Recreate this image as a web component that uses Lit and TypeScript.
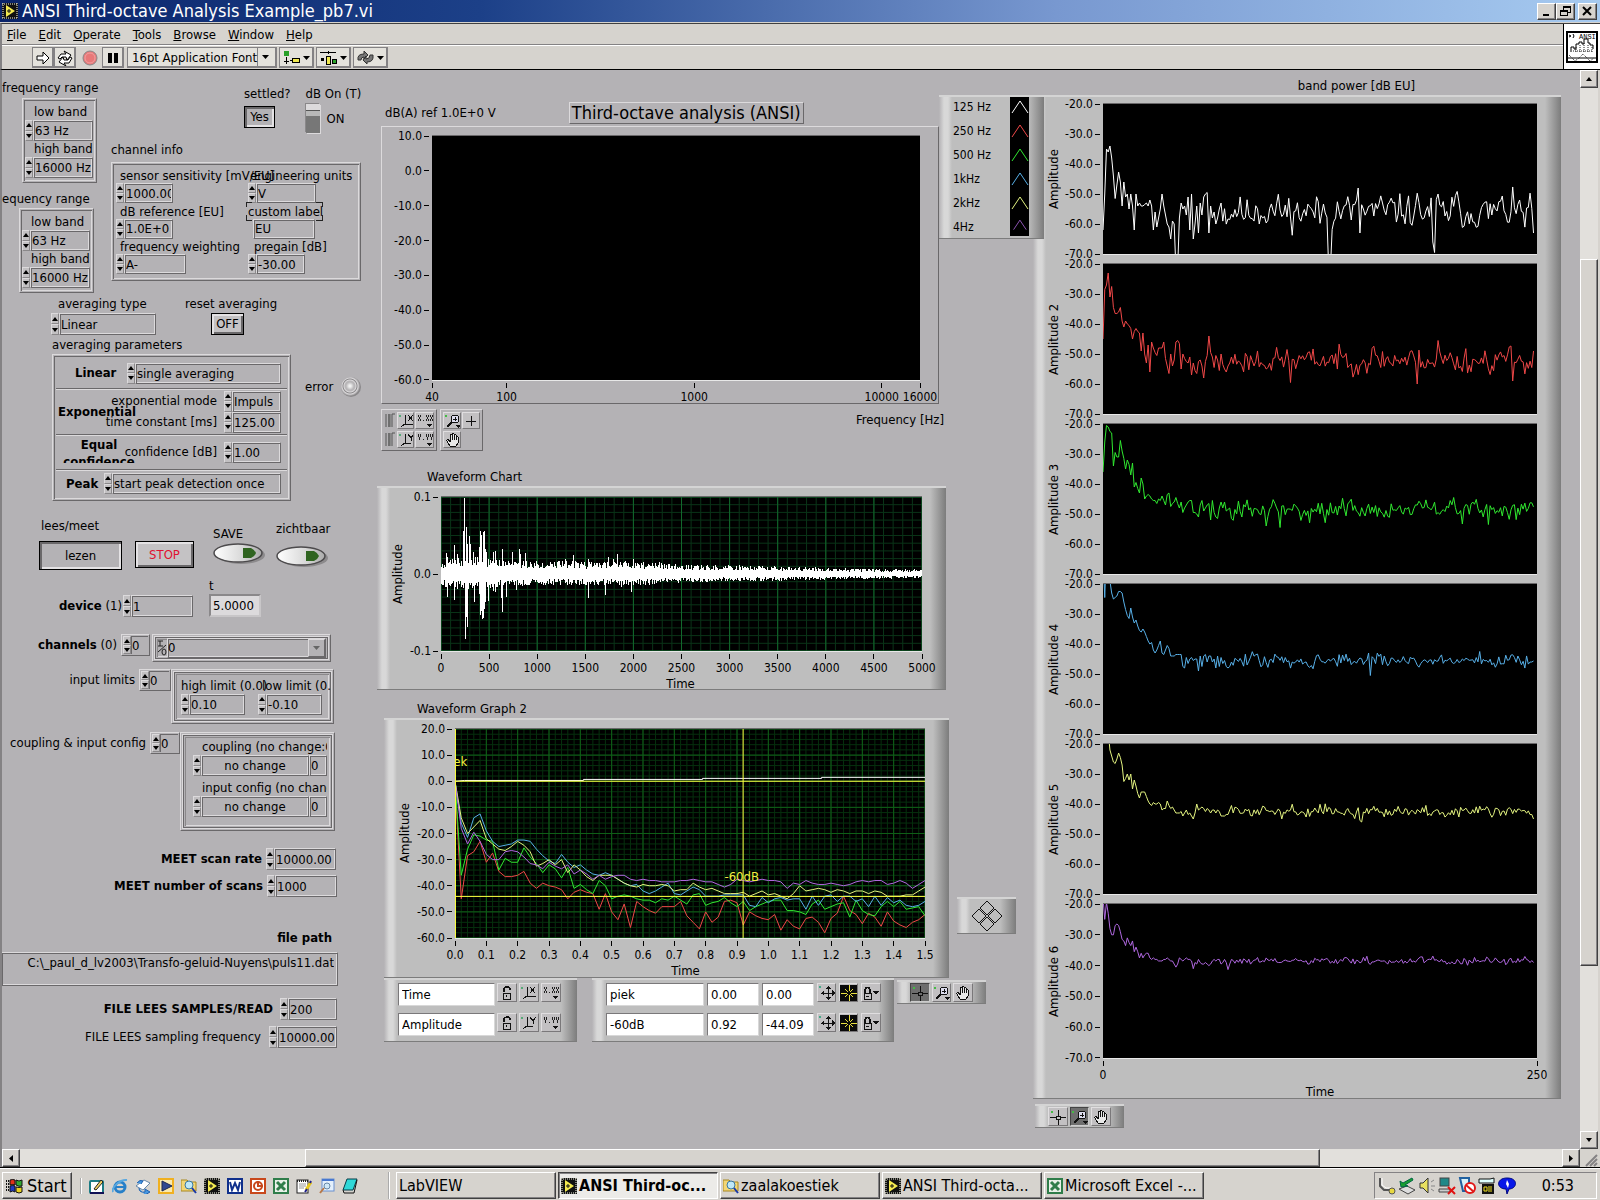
import { LitElement, html, svg, css, nothing } from "lit";
import { customElement, state } from "lit/decorators.js";
import { styleMap } from "lit/directives/style-map.js";
import { classMap } from "lit/directives/class-map.js";

/* ---------- data ---------- */

const COLORS = ["#ffffff", "#f04848", "#30e830", "#58b0e8", "#e4f480", "#b068e0"];

const RED = [0, -45, -28.5, -27, -23, -31, -27.5, -34.5, -36.5, -36.5, -36, -34.5, -39, -41, -39, -40, -40.5, -41.5, -45, -42.5, -41.5, -42.5, -43, -49, -43, -50, -53, -47, -56, -46, -48, -49.5, -50.5, -48, -48, -48, -46, -51.5, -54, -56.5, -50, -54, -52, -46, -45.5, -46.5, -55, -50, -51.5, -52.5, -53, -51, -57, -53, -55.5, -56.5, -52.5, -52, -54, -58, -52.5, -50.5, -44, -49.5, -51, -54.5, -50.5, -52, -55.5, -50, -53.5, -55, -56, -54, -53, -51];
const GREEN = [0, -36, -26, -20.5, -21, -22.5, -23, -34, -29.5, -31, -31, -25.5, -29, -31.5, -35, -32, -33.5, -37, -33, -41, -39.5, -41.5, -43, -38, -40, -45, -44, -43.5, -44, -45, -45.5, -45.5, -46.5, -45, -45.5, -44, -45.5, -47, -43.5, -43, -47.5, -46.5, -46, -44.5, -46.5, -48, -46, -49.5, -48, -47, -46, -45.5, -45.5, -49.5, -49.5, -50, -51, -47, -45.5, -49, -48, -47, -46.5, -52, -45.5, -49.5, -51, -51.5, -48, -46, -48, -46, -49, -48.5, -48, -51.5];
const BLUE = [0, -16, -21.5, -14, -12.5, -19, -23, -25, -24.5, -24, -22.5, -22.5, -23, -26, -28.5, -30.5, -31.5, -28, -31, -33, -32, -34, -35.5, -36, -35, -36, -37.5, -39, -40, -39.5, -42, -43, -42, -40.5, -39, -43, -43.5, -42, -40.5, -41.5, -44, -44, -44, -43.5, -43.5, -43.5, -43.5, -47.5, -48, -44.5, -46.5, -45, -44.5, -45.5, -45, -45, -49, -44, -47.5, -44, -43.5, -46, -44, -44, -46, -45, -48, -44, -47.5, -44.5, -46.5, -45.5, -47.5, -48, -47.5, -46];
const YELLOW = [0, -14, -20, -17.5, -15, -22, -24, -26, -26.5, -25, -23, -24.5, -27, -32.5, -31.5, -30, -32, -30, -35, -32, -34, -36.5, -38, -36, -36, -36, -37.5, -39, -40, -40.5, -39.5, -40, -40, -39.5, -40, -42, -41.5, -41.5, -39, -40.5, -41.5, -41, -42, -43, -43, -43, -42.5, -44, -43, -42, -43.5, -43, -44, -45, -43, -40, -42, -41.5, -41, -41.5, -42.5, -41.5, -42, -43, -42, -42, -43, -42, -42.5, -44, -44, -44, -43.5, -43.5, -42, -40.5];
const PURPLE = [0, -18, -24, -19.5, -23, -28, -30, -30, -27, -26.5, -27, -29, -31.5, -32, -33.5, -31, -32.5, -33.5, -32, -35.5, -34, -35.5, -37.5, -36, -37.5, -36.5, -36, -36, -37.5, -38, -37.5, -38, -38, -38.5, -38.5, -38.5, -38, -38, -37.5, -38, -38.5, -38.5, -39.5, -40.5, -39.5, -37.5, -38, -38.5, -38, -37.5, -38, -38, -38.5, -41, -39, -39.5, -38, -39, -39.5, -39.5, -39, -39.5, -40, -39.5, -38.5, -38, -38.5, -38, -38, -39.5, -39, -38, -39, -41, -39.5, -38];
const STEPS: [number, number][] = [[0, 0], [0.03, 0.3], [0.41, 0.3], [0.41, 0.7], [0.79, 0.7], [0.79, 1.1], [1.17, 1.1], [1.17, 1.5], [1.5, 1.5]];
const WHITE_HEAD = [-62, -50, -35, -36, -34, -38, -44, -51.5, -47, -42.7, -46, -54, -46, -51, -50, -55, -50, -54, -62, -50, -54, -53, -54, -54, -53.5, -53, -54, -52, -54, -62, -56, -61, -58, -55, -50, -54, -57, -60, -61, -65, -59, -60, -75, -75, -58, -53, -55, -54, -57, -51, -62, -50, -65, -60, -54, -63, -53, -57, -51, -50, -49.5, -63, -54, -58, -56, -60, -58, -55, -53];

function random(seed: number) {
  let s = seed;
  return () => {
    s = (s * 1664525 + 1013904223) % 4294967296;
    return s / 4294967296;
  };
}

/** Extends a measured decay with stationary noise up to 250 samples. */
function extend(head: number[], mean: number, spread: number, seed: number, spikes: Record<number, number> = {}) {
  const rnd = random(seed);
  const out = head.slice();
  let slow = 0;
  while (out.length < 249) {
    slow = slow * 0.5 + (rnd() - 0.5) * spread;
    out.push(mean + slow + (rnd() + rnd() - 1) * spread * 1.2);
  }
  for (const key of Object.keys(spikes)) out[+key] = spikes[+key];
  return out;
}

const BANDS = [
  extend(WHITE_HEAD, -55.5, 5, 11, { 130: -75, 131: -75, 147: -48, 148: -63, 190: -66, 191: -69.5, 193: -50, 248: -63 }),
  extend(RED.slice(1), -52, 3.6, 23, { 108: -59.5, 181: -60, 193: -45.5, 236: -59, 248: -49 }),
  extend(GREEN.slice(1), -48.5, 2.8, 31, { 80: -51, 94: -54, 102: -54.5, 202: -44.5, 222: -53.5 }),
  extend(BLUE.slice(1).map((v, i) => (i < 4 ? v + 3 * (i % 2 ? -1 : 2) : v)), -45.5, 2, 47, { 154: -50.5, 153: -43, 217: -42.5 }),
  extend([-19, -19, -17, -16, ...YELLOW.slice(5)], -42.3, 1.6, 59, { 148: -45.5, 149: -46 }),
  extend([-18, -25, -19.5, ...PURPLE.slice(4)], -38.6, 1.1, 61, { 72: -41.3 }),
];

function points(values: number[], count: number, top: number, bottom: number) {
  return values.map((v, i) => `${((i / count) * 1000).toFixed(1)},${(((top - v) / (top - bottom)) * 100).toFixed(2)}`).join(" ");
}

/** Column-wise min/max envelope of the recorded impulse response. */
function waveform() {
  const rnd = random(7);
  const level: [number, number][] = [[0, 10], [6, 13], [20, 14], [45, 15], [60, 12], [85, 11], [120, 11], [200, 11], [240, 8], [320, 7], [400, 5], [481, 4]];
  const up: Record<number, number> = { 5: 21, 6: 17, 13: 29, 16: 20, 22: 43, 23: 76, 25: 47, 26: 30, 28: 38, 29: 30, 32: 22, 38: 27, 39: 43, 40: 39, 42: 42, 43: 43, 44: 25, 45: 22, 52: 22, 54: 23, 61: 25, 71: 22, 78: 25, 79: 20, 84: 21, 124: 15, 132: 19, 147: 15, 167: 17, 172: 15, 176: 20, 192: 15 };
  const down: Record<number, number> = { 6: 23, 13: 26, 16: 15, 24: 65, 25: 43, 26: 53, 27: 15, 33: 28, 38: 20, 39: 41, 40: 37, 41: 45, 42: 44, 43: 35, 44: 28, 47: 27, 52: 17, 54: 18, 60: 24, 61: 38, 65: 23, 75: 16, 147: 24, 164: 21, 190: 18, 180: 13, 237: 9 };
  let d = "";
  for (let x = 0; x < 481; x++) {
    let k = 0;
    while (level[k + 1][0] < x) k++;
    const [x0, a] = level[k];
    const [x1, b] = level[k + 1];
    const amp = a + ((b - a) * (x - x0)) / (x1 - x0);
    const u = up[x] ?? amp * (0.5 + rnd() * 0.7);
    const v = down[x] ?? amp * (0.45 + rnd() * 0.6);
    d += `M${x} ${(77 - u).toFixed(1)}V${(77 + v).toFixed(1)}`;
  }
  return d;
}
const WAVE = waveform();

const range = (n: number) => Array.from({ length: n }, (_, i) => i);
const gridPath = (cols: number, rows: number) =>
  range(cols + 1).map((i) => `M${(i * 1000) / cols} 0V100`).join("") + range(rows + 1).map((i) => `M0 ${(i * 100) / rows}H1000`).join("");

/* ---------- icons ---------- */

const lvIcon = html`<svg width="16" height="16" viewBox="0 0 16 16"><rect width="16" height="16" fill="#101010"/><path d="M1 0v16M15 0v16M0 1h16M0 15h16" stroke="#f4f4e0" stroke-dasharray="1 1"/><path d="M4 2l9 6-9 6z" fill="#f4ea50"/><path d="M5 8h4M7 6v4" stroke="#111"/></svg>`;
const excelIcon = html`<svg width="16" height="16" viewBox="0 0 16 16"><rect x="1" y="1" width="14" height="14" fill="#e8f0e8" stroke="#2f7d4a" stroke-width="2"/><path d="M4 4l8 8M12 4l-8 8" stroke="#2f7d4a" stroke-width="3"/></svg>`;
const searchIcon = html`<svg width="16" height="16" viewBox="0 0 16 16"><path d="M0 2h6l2 2h7v9H0z" fill="#f3d675" stroke="#a88820"/><circle cx="8" cy="7" r="4" fill="#bfe8f8" stroke="#3a78a0"/><path d="M11 10l4 5" stroke="#1838a8" stroke-width="2"/></svg>`;

const quick = [
  html`<svg width="16" height="16" viewBox="0 0 16 16"><rect x="1" y="3" width="13" height="12" rx="1" fill="#fff" stroke="#1c7c84" stroke-width="2"/><path d="M1 15h14" stroke="#115" stroke-width="2"/><path d="M5 11l7-9 2 2-7 8z" fill="#f0d060" stroke="#222"/></svg>`,
  html`<svg width="16" height="16" viewBox="0 0 16 16"><circle cx="8" cy="9" r="5" fill="none" stroke="#2880c8" stroke-width="3"/><path d="M4 9h9" stroke="#2880c8" stroke-width="2"/><path d="M1 14C-1 10 8 1 15 2" fill="none" stroke="#58a8e0" stroke-width="2"/></svg>`,
  html`<svg width="16" height="16" viewBox="0 0 16 16"><path d="M1 8l8-6 6 3-7 7z" fill="#fff" stroke="#68a"/><path d="M2 5q3-4 6-2l-2 3M4 10q0 5 6 4v-3l5 3-5 3" fill="#4898e0" stroke="#2060b0"/></svg>`,
  html`<svg width="16" height="16" viewBox="0 0 16 16"><rect x="1" y="1" width="14" height="14" fill="#f8e8b0" stroke="#f0b020" stroke-width="2"/><path d="M4 3l10 5-10 5z" fill="#304890" stroke="#1c2850"/></svg>`,
  searchIcon,
  lvIcon,
  html`<svg width="16" height="16" viewBox="0 0 16 16"><rect width="16" height="16" fill="#10308c"/><rect x="2" y="2" width="12" height="12" fill="#fff"/><path d="M3 4l2 8 3-7 3 7 2-8" fill="none" stroke="#10308c" stroke-width="2"/></svg>`,
  html`<svg width="16" height="16" viewBox="0 0 16 16"><rect width="16" height="16" fill="#c8481c"/><rect x="2" y="2" width="12" height="12" fill="#fff"/><circle cx="8" cy="8" r="4" fill="none" stroke="#c8481c" stroke-width="2"/><path d="M8 3v5h5" stroke="#c8481c" stroke-width="2" fill="none"/></svg>`,
  excelIcon,
  html`<svg width="16" height="16" viewBox="0 0 16 16"><rect x="1" y="2" width="11" height="13" fill="#fff" stroke="#222"/><path d="M1 3h11" stroke="#222" stroke-width="2" stroke-dasharray="1 1"/><path d="M3 6h7M3 8h7M3 10h5" stroke="#999"/><path d="M10 12l5-8" stroke="#e8c820" stroke-width="3"/><path d="M9 14l2-3M14 5l1-2" stroke="#20208c" stroke-width="2"/></svg>`,
  html`<svg width="16" height="16" viewBox="0 0 16 16"><rect x="3" y="1" width="12" height="12" fill="#e4f0fc" stroke="#6890d0"/><path d="M3 2h12" stroke="#4878d0" stroke-width="2"/><circle cx="8" cy="8" r="3" fill="#cfe8f8" stroke="#68a"/><path d="M5 10l-4 5" stroke="#b87848" stroke-width="2"/></svg>`,
  html`<svg width="16" height="16" viewBox="0 0 16 16"><path d="M5 1h10l-4 11H1z" fill="#30d8d8" stroke="#063c48"/><path d="M1 12l1 3h10l3-13" fill="none" stroke="#111"/></svg>`,
];

const tray = [
  html`<svg width="18" height="18" viewBox="0 0 18 18"><path d="M2 1v8l4 4h6" fill="none" stroke="#555" stroke-width="2"/><path d="M4 1v7l4 3h5" fill="none" stroke="#fff"/><circle cx="14" cy="14" r="3" fill="#e8d840" stroke="#555"/></svg>`,
  html`<svg width="18" height="18" viewBox="0 0 18 18"><path d="M1 12l8-3 8 4-7 4z" fill="#ddd" stroke="#444"/><path d="M14 1L5 6l-3-2 1 6 7-1-3-1 8-5z" fill="#18a030" stroke="#064"/></svg>`,
  html`<svg width="18" height="18" viewBox="0 0 18 18"><path d="M2 6h3l5-5v15l-5-5H2z" fill="#e8e060" stroke="#333"/><path d="M13 5l3-2M13 9h4M13 12l3 2" stroke="#888"/></svg>`,
  html`<svg width="18" height="18" viewBox="0 0 18 18"><rect x="2" y="1" width="9" height="8" fill="#208888" stroke="#444"/><path d="M1 12h11v3H1z" fill="#ccc" stroke="#444"/><path d="M10 10l7 7M17 10l-7 7" stroke="#e01010" stroke-width="2"/></svg>`,
  html`<svg width="18" height="18" viewBox="0 0 18 18"><path d="M2 1h9v13H5z" fill="#d8f0f8" stroke="#2060a0" stroke-width="2"/><circle cx="12" cy="11" r="5" fill="#fff" stroke="#e01818" stroke-width="2"/><path d="M8 8l8 7" stroke="#e01818" stroke-width="2"/></svg>`,
  html`<svg width="18" height="18" viewBox="0 0 18 18"><path d="M1 2h11l4-1v5H1z" fill="#dff" stroke="#111"/><rect x="4" y="7" width="12" height="10" fill="#111"/><path d="M6 10h3v4H6zM11 9v6M13 9v6" stroke="#f0e020" fill="none"/></svg>`,
  html`<svg width="18" height="18" viewBox="0 0 18 18"><path d="M9 1c12 0 10 11 2 11l-2 5-1-5C-2 12-2 1 9 1z" fill="#0818e8" stroke="#000880"/><path d="M9 3l2 4-1 4-2-4z" fill="#fff"/></svg>`,
];

const glyphs = {
  lock: html`<svg width="18" height="16" viewBox="0 0 18 16"><path d="M6 7V5a3 3 0 0 1 6 0" fill="none" stroke="#111" stroke-width="1.500"/><rect x="5" y="8" width="7" height="6" fill="none" stroke="#111"/><path d="M8 10v2" stroke="#111"/></svg>`,
  lockDrop: html`<svg width="18" height="16" viewBox="0 0 18 16"><path d="M3 8V5a2 2 0 0 1 5 0v3" fill="none" stroke="#111" stroke-width="1.500"/><path d="M2 8h7v6H2zM4 11h3" fill="none" stroke="#111"/><path d="M11 6h6l-3 4z" fill="#111"/></svg>`,
  x: html`<svg width="18" height="16" viewBox="0 0 18 16"><circle cx="2" cy="3" r="1" fill="#5a7"/><path d="M7 2v9h9M7 11l-4 3M10 2l5 6M15 2l-5 6" fill="none" stroke="#111"/></svg>`,
  y: html`<svg width="18" height="16" viewBox="0 0 18 16"><circle cx="2" cy="3" r="1" fill="#5a7"/><path d="M7 2v9h6M7 11l-4 3M10 2l3 4 3-4M13 6v3" fill="none" stroke="#111"/></svg>`,
  fmtX: html`<svg width="18" height="16" viewBox="0 0 18 16"><path d="M2 2v2M4 2v2M3 4v2M2 6v2M4 6v2M7 7v1M10 2v2M12 2v2M11 4v2M10 6v2M12 6v2M14 2v2M16 2v2M15 4v2M14 6v2M16 6v2" fill="none" stroke="#222"/><path d="M10 11h6l-3 3z" fill="#111"/></svg>`,
  fmtY: html`<svg width="18" height="16" viewBox="0 0 18 16"><path d="M2 2v3M4 2v3M3 5v3M7 7v1M10 2v3M12 2v3M11 5v3M14 2v3M16 2v3M15 5v3" fill="none" stroke="#222"/><path d="M10 11h6l-3 3z" fill="#111"/></svg>`,
  move: html`<svg width="18" height="16" viewBox="0 0 18 16"><circle cx="2" cy="2" r="1" fill="#4a8"/><path d="M10 1v14M3 8h14" stroke="#111"/><path d="M7 4l3-3 3 3zM7 12l3 3 3-3zM6 5L3 8l3 3zM14 5l3 3-3 3z" fill="#111"/></svg>`,
  cursor: html`<svg width="18" height="16" viewBox="0 0 18 16"><rect width="18" height="16" fill="#0a0a0a"/><path d="M1 8h6M11 8h6M9 0v6M9 10v6M5 4l3 3M10 9l3 3M13 4l-3 3M8 9l-3 3" stroke="#e8e040"/></svg>`,
  cross: html`<svg width="18" height="16" viewBox="0 0 18 16"><circle cx="3" cy="3" r="1" fill="#4b4"/><path d="M9 1v6M9 10v6M1 8h6M11 8h6M7 7h4v3H7z" stroke="#111" fill="none"/></svg>`,
  zoom: html`<svg width="18" height="16" viewBox="0 0 18 16"><circle cx="2" cy="3" r="1" fill="#4b4"/><circle cx="11" cy="6" r="4" fill="#dde" stroke="#111"/><path d="M9 6h4M11 4v4" stroke="#111"/><path d="M8 9l-5 5" stroke="#111" stroke-width="2"/><path d="M11 12h6l-3 3z" fill="#111"/></svg>`,
  hand: html`<svg width="18" height="16" viewBox="0 0 18 16"><path d="M6 14C4 11 2 9 3 8s2 0 3 2V3q1-1 2 0V2q1-1 2 0v1q1-1 2 0v2q1-1 2 0v6l-2 3zM8 3v5M10 3v5M12 4v4" fill="#e8e8e8" stroke="#111"/></svg>`,
  plus: html`<svg width="16" height="16" viewBox="0 0 16 16"><path d="M8 3v10M3 8h10" stroke="#111"/></svg>`,
  bars: html`<svg width="12" height="16" viewBox="0 0 12 16"><rect x="4" y="2" width="3" height="13" fill="#8a8a8a"/><path d="M2 2v13M5 2v13M8 15V2h3" stroke="#555" fill="none"/></svg>`,
};

const upTri = html`<svg width="6" height="4" viewBox="0 0 6 4"><path d="M0 4l3-4 3 4z" fill="#000"/></svg>`;
const downTri = html`<svg width="6" height="4" viewBox="0 0 6 4"><path d="M0 0l3 4 3-4z" fill="#000"/></svg>`;
const drop = html`<svg width="7" height="4" viewBox="0 0 7 4"><path d="M0 0h7L3.500 4z" fill="#000"/></svg>`;

/* ---------- chart ---------- */

interface ChartSpec {
  size: string;
  yTicks: string[];
  yLabel?: string;
  plot?: unknown;
  overlay?: unknown;
  xTicks?: [string, number][];
}

const chart = (c: ChartSpec) => html`
  <div class="chart ${c.size}">
    <div class="gutter">
      <span class="ylabel">${c.yLabel ?? nothing}</span>
      <div class="yticks">${c.yTicks.map((t) => html`<span class="ytick">${t}<i></i></span>`)}</div>
    </div>
    <div class="plot">
      <svg class="trace" viewBox="0 0 1000 100" preserveAspectRatio="none" role="img" aria-label=${c.yLabel ?? "spectrum"}>${c.plot ?? nothing}</svg>
      ${c.overlay ?? nothing}
    </div>
    ${c.xTicks
      ? html`<div class="xticks">${c.xTicks.map(([t, p]) => html`<span class="xtick" style=${styleMap({ left: `${p}%` })}><i></i>${t}</span>`)}</div>`
      : nothing}
  </div>
`;

const line = (values: number[], count: number, top: number, bottom: number, color: string) =>
  svg`<polyline points=${points(values, count, top, bottom)} fill="none" stroke=${color} />`;

@customElement("app-root")
export class AppRoot extends LitElement {
  @state() private running = true;

  static styles = css`
    :host {
      display: flex;
      flex-direction: column;
      min-height: 100vh;
      box-sizing: border-box;
      background: #d6d3ce;
      color: #000;
      font: 13px/16px "DejaVu Sans Condensed", Tahoma, "DejaVu Sans", sans-serif;
      white-space: nowrap;
      overflow: hidden;
    }
    *, *::before { box-sizing: border-box; }
    svg { display: block; flex: none; }
    .px { shape-rendering: crispEdges; }
    button, input, select { font: inherit; color: inherit; margin: 0; padding: 0; border-radius: 0; appearance: none; }
    input { min-width: 0; }

    .titlebar { display: flex; align-items: center; gap: 4px; height: 22px; padding: 0 3px 0 2px; background: linear-gradient(90deg, #0a246a, #1c4088 30%, #7898d0 66%, #a6caf0); color: #fff; font-size: 18px; }
    .titlebar h1 { flex: 1; margin: 0; font: inherit; line-height: 22px; }
    .winbtns { display: flex; }
    .winbtns button { display: grid; place-items: center; width: 19px; height: 17px; }
    .winbtns button:last-child { margin-left: 3px; }
    .raised, .winbtns button { background: #d6d3ce; border: 1px solid; border-color: #fff #404040 #404040 #fff; box-shadow: inset -1px -1px #848284; }

    .chrome { display: flex; margin-top: 1px; border-top: 1px solid #404040; border-left: 2px solid #848284; border-bottom: 1px solid #000; }
    .bars { flex: 1; }
    .menu { display: flex; gap: 12px; height: 21px; padding-left: 5px; line-height: 21px; border-bottom: 1px solid #848284; }
    .menu a { color: inherit; text-decoration: none; }
    .tools { display: flex; align-items: center; height: 24px; padding-left: 30px; border-top: 1px solid #fff; }
    .tools button { display: flex; align-items: center; justify-content: center; gap: 3px; height: 21px; width: 22px; background: #e4e2dc; border: 1px solid; border-color: #fff #404040 #404040 #fff; box-shadow: inset -1px -1px #848284; outline: 1px solid #848284; outline-offset: -1px; }
    .tools .flat { border-color: #d6d3ce; background: #d6d3ce; box-shadow: none; outline: none; margin: 0 1px 0 3px; }
    .tools .wide { width: 35px; margin-left: 2px; }
    .font { position: relative; margin-left: 3px; }
    .font select { display: block; width: 150px; height: 21px; padding-left: 4px; background: #e4e2dc; border: 1px solid; border-color: #fff #404040 #404040 #fff; box-shadow: inset -1px -1px #848284, inset -18px 0 #e4e2dc, inset -19px 0 #848284; outline: 1px solid #848284; outline-offset: -1px; }
    .font svg { position: absolute; right: 8px; top: 8px; pointer-events: none; }
    .viicon { display: grid; place-items: center; width: 37px; background: #fff; border-left: 1px solid #000; }

    .workspace { flex: 1; display: grid; grid-template-columns: minmax(0, 1fr) 18px; grid-template-rows: 1fr 18px; border-left: 2px solid #848284; padding-right: 2px; }
    .panel { display: flex; background: #b4b2b5; }
    .left { flex: none; width: 368px; }
    .center { flex: 663 1 0; min-width: 0; display: flex; flex-direction: column; }
    .right { flex: 528 1 0; min-width: 0; margin-right: 19px; }

    .vscroll, .hscroll { display: flex; background: #e2e0dc; }
    .vscroll { flex-direction: column; }
    .vscroll button, .hscroll button { display: grid; place-items: center; flex: none; }
    .vscroll button { height: 18px; }
    .hscroll button { width: 18px; }
    .vtrack { flex: 171 1 0; } .vthumb { flex: 707 1 0; } .vrest { flex: 165 1 0; }
    .htrack { flex: 286 1 0; } .hthumb { flex: 1015 1 0; } .hrest { flex: 243 1 0; }

    /* etched boxes and numeric fields */
    .etched { background: transparent; border: 1px solid; border-color: #dcdadc #6a686a #6a686a #dcdadc; box-shadow: inset 1px 1px #6a686a, inset -1px -1px #dcdadc; }
    .cluster { background: transparent; border: 1px solid; border-color: #dcdadc #6a686a #6a686a #dcdadc; box-shadow: inset 0 0 0 1px #b4b2b5, inset 2px 2px #6a686a, inset -2px -2px #dcdadc; }
    .array { background: transparent; border: 1px solid; border-color: #dcdadc #6a686a #6a686a #dcdadc; box-shadow: inset 0 0 0 1px #b4b2b5, inset 0 0 0 2px #dcdadc, inset 0 0 0 3px #6a686a, inset 0 0 0 4px #b4b2b5, inset 5px 5px #8a888a, inset -5px -5px #dcdadc; }
    .num { display: flex; height: 21px; }
    .num input { height: 100%; padding: 0 1px; outline: none; }
    .num.h20 { height: 20px; }
    .num.h22 { height: 22px; }
    .spin { display: flex; flex-direction: column; width: 8px; }
    .spin button { flex: 1; display: grid; place-items: center; background: #c2c0c2; border: 1px solid; border-color: #dcdadc #8a888a #8a888a #dcdadc; }
    .w48 { width: 49px; } .w58 { width: 60px; } .w62 { width: 62px; } .w96 { width: 97px; } .w107 { width: 108px; } .w145 { width: 146px; } .w168 { width: 169px; }
    .mid { text-align: center; }
    label, .label { display: block; }

    .top { display: flex; height: 225px; }
    .ranges { width: 102px; padding-top: 10px; }
    .ranges .cluster { width: 75px; height: 85px; padding: 5px 2px; }
    .ranges .first { margin: 2px 0 8px 20px; }
    .ranges .second { margin: 1px 0 0 17px; }
    .ranges .cluster label { padding-left: 9px; }
    .info { padding: 16px 0 0 7px; }
    .switches { display: flex; gap: 15px; height: 56px; padding-left: 133px; }
    .btn { display: grid; place-items: center; background: #c4c2c4; border: 1px solid #000; box-shadow: inset 2px 2px #e4e2e4, inset -2px -2px #6a686a; }
    .btn.sunk { background: #b4b2b5; box-shadow: inset 2px 2px #6a686a, inset -2px -2px #e4e2e4; }
    .yes { width: 31px; height: 22px; margin-top: 4px; }
    .toggle { display: flex; align-items: center; gap: 7px; margin-top: 2px; }
    .toggle button { width: 14px; height: 29px; border: 0; background: linear-gradient(#dcdadc 0 6px, #555 6px 7px, #b8b8b8 7px 12px, #777 12px); box-shadow: 1px 1px #dcdadc, -1px -1px #8a888a; }
    .channel { display: grid; grid-template-columns: 132px 1fr; width: 250px; height: 119px; margin-top: 4px; padding: 5px 4px; }
    .channel label { height: 15px; line-height: 15px; padding-left: 4px; }
    .channel .unit { padding-left: 2px; }
    .channel .pre { padding-left: 6px; }
    .marked { position: relative; }
    .channel .marked { width: 72px; padding-left: 0; }
    .marked svg { position: absolute; left: -3px; top: -3px; }
    .nospin { padding-left: 5px; }

    .avg { display: flex; padding: 1px 0 0 49px; gap: 29px; }
    .avg label { padding-left: 7px; margin-bottom: 1px; }
    .avg .off { width: 33px; height: 22px; margin: 1px 0 0 26px; }
    .ptitle { padding: 2px 0 1px 50px; height: 19px; }
    .params { display: flex; gap: 14px; padding-left: 50px; }
    .params .cluster { width: 239px; height: 147px; padding: 3px; display: grid; grid-template-rows: 31px 46px 35px 1fr; }
    .prow { display: grid; align-items: center; justify-items: end; padding: 0 6px 0 2px; border-bottom: 1px solid #6a686a; box-shadow: 0 1px #dcdadc; }
    .prow:last-child { border: 0; box-shadow: none; }
    .prow > * { grid-area: 1 / 1; }
    .prow b { justify-self: start; }
    .prow .indent1 { padding-left: 17px; }
    .prow .indent2 { padding-left: 8px; }
    .prow .eq { align-self: start; width: 82px; height: 28px; line-height: 17px; padding-top: 1px; text-align: center; overflow: hidden; white-space: normal; }
    .pair { display: flex; align-items: center; gap: 7px; }
    .prow .pair { justify-content: flex-end; }
    .error { display: flex; align-items: center; gap: 8px; height: 22px; margin-top: 22px; }
    .led { width: 20px; height: 20px; border-radius: 50%; background: radial-gradient(circle at 45% 45%, #f0f0f0 0 1px, #b8b6b8 4px 5px, #dcdadc 6px, #8a888a 7px, #dcdadc 8px, #8a888a 10px); }

    .actions { display: flex; height: 75px; padding: 17px 0 0 37px; }
    .actions label { padding-left: 2px; }
    .lezen { width: 83px; height: 29px; margin-top: 7px; }
    .stop { width: 59px; height: 27px; margin: 23px 19px 0 13px; color: #e01030; }
    .oval { display: block; padding: 0; border: 0; background: none; }
    .save { padding-top: 8px; width: 63px; }
    .show { padding-top: 3px; }
    .show .oval { margin-top: 8px; }

    .device { display: flex; align-items: flex-end; height: 41px; gap: 14px; }
    .device .pair { width: 191px; justify-content: flex-end; gap: 1px; }
    .tfield { padding-left: 2px; }
    .tfield input { width: 52px; height: 23px; padding: 0 2px; background: #dcdadc; border: 2px solid; border-color: #8a888a #c8c6c8 #c8c6c8 #8a888a; }
    .row { display: flex; justify-content: flex-end; align-items: flex-start; gap: 4px; padding-right: 36px; }
    .row > label { line-height: 22px; }
    .row > .index { margin-right: -4px; }
    .index { padding: 1px; height: 22px; border: 1px solid; border-color: #dcdadc #6a686a #6a686a #dcdadc; }
    .index .num { height: 18px; }
    .index input { border: 0; background: transparent; width: 20px; box-shadow: inset 1px 1px #6a686a; }
    .channels { margin-top: 17px; padding-right: 39px; }
    .channels .index input { width: 17px; }
    .row.channels > .index { margin-right: -2px; }
    .io { display: flex; align-items: center; width: 179px; height: 28px; padding: 0 4px; position: relative; }
    .io select { flex: 1; height: 20px; background: transparent; padding-left: 0; }
    .io .dd { position: absolute; right: 5px; top: 4px; width: 17px; height: 18px; display: grid; place-items: center; background: #b4b2b5; border: 1px solid; border-color: #dcdadc #6a686a #6a686a #dcdadc; pointer-events: none; }
    .limits { margin-top: 7px; }
    .limits .array { display: flex; width: 163px; height: 55px; padding: 8px 6px 0 9px; gap: 13px; overflow: hidden; }
    .limits .array > div { width: 64px; }
    .limits .array > div:last-child label { padding-left: 4px; }
    .coupling { margin-top: 8px; padding-right: 35px; }
    .coupling .array { width: 155px; height: 99px; padding: 6px 7px 0 12px; overflow: hidden; }
    .coupling .array label { padding-left: 9px; overflow: hidden; }
    .coupling .array > div { height: 41px; }
    .coupling .num input:last-child { width: 18px; }
    .meet1 { margin-top: 17px; padding-right: 34px; }
    .meet2 { margin-top: 5px; padding-right: 33px; }
    .pathlabel { margin: 33px 38px 6px 0; text-align: right; }
    .path { display: block; width: 336px; height: 34px; padding: 0 3px 14px 0; text-align: right; border-left: 0; }
    .file1 { margin: 12px 0 6px; padding-right: 33px; gap: 7px; }
    .file2 { padding-right: 33px; gap: 8px; }

    /* charts */
    .metal { background: linear-gradient(90deg, #b4b2b5 0, #d8d8d8 5px, #d8d8d8 9px, #bebebe 13px, #bebebe calc(100% - 16px), #7c7c7c 100%); border-top: 2px solid #d4d4d4; border-bottom: 1px solid #7c7c7c; }
    .chart { display: grid; grid-template-columns: var(--gutter) minmax(0, 1fr); }
    .gutter { display: flex; }
    .ylabel { width: 16px; margin-left: 13px; writing-mode: vertical-rl; transform: rotate(180deg); text-align: center; line-height: 16px; }
    .yticks { flex: 1; display: flex; flex-direction: column; justify-content: space-between; padding: 1px 3px 1px 0; }
    .ytick { display: flex; align-items: center; justify-content: flex-end; gap: 2px; height: 0; }
    .yticks, .xticks { font-size: 12px; }
    .ytick i { width: 5px; height: 1px; background: #000; }
    .plot { position: relative; overflow: hidden; height: var(--h); background: #000; border-top: 1px solid #6a686a; border-bottom: 1px solid #e8e8e8; }
    .trace { position: absolute; inset: 0; width: 100%; height: 100%; }
    .trace * { vector-effect: non-scaling-stroke; stroke-width: 1px; }
    .xticks { grid-column: 2; position: relative; height: 24px; }
    .xtick { position: absolute; top: 2px; width: 0; display: flex; flex-direction: column; align-items: center; gap: 1px; }
    .xtick i { flex: none; width: 1px; height: 5px; background: #000; }
    .cursorname { position: absolute; width: 0; display: flex; justify-content: center; color: #f0f040; }
    .flag1 { left: 0; top: 12%; }
    .flag2 { left: 61%; top: 67%; }
    .xlabel { display: block; height: 14px; text-align: center; }

    .spectrum { display: flex; align-items: flex-start; padding: 25px 0 0 11px; }
    .specmain { flex: 1; min-width: 0; }
    .spechead { display: flex; align-items: center; height: 31px; padding: 4px 4px 0; }
    .spechead h2 { margin: 0 0 0 73px; padding: 0 2px; font: inherit; font-size: 18px; line-height: 20px; border: 1px solid; border-color: #dcdadc #6a686a #6a686a #dcdadc; }
    .s1frame { border: 1px solid; border-color: #dcdadc #6a686a #6a686a #dcdadc; padding: 8px 18px 0 0; }
    .s1 { --gutter: 50px; --h: 246px; }
    .s1 .ylabel { width: 0; margin: 0; }
    .s1 .xticks { height: 22px; }
    .below { display: flex; justify-content: space-between; padding-top: 5px; }
    .below > span { margin: 3px -5px 0 0; }
    .pals { display: flex; gap: 3px; align-items: flex-start; }
    .pal { display: grid; gap: 2px; padding: 2px; border: 1px solid; border-color: #dcdadc #6a686a #6a686a #dcdadc; }
    .pal.three { grid-template-columns: 12px 17px 19px; gap: 2px 1px; }
    .pal.two { grid-template-columns: 18px 18px; gap: 2px 1px; }
    .pal button { height: 17px; }
    .tool { display: grid; place-items: center; overflow: hidden; background: #c2c0c2; border: 1px solid; border-color: #e0dee0 #7a787a #7a787a #e0dee0; }
    .tool svg { shape-rendering: crispEdges; }
    .tool.on { background: #6e6e6e; border-color: #444 #ccc #ccc #444; }
    .legend { position: relative; z-index: 1; flex: none; width: 105px; margin: 0 -11px 0 0; padding: 0 15px 2px 14px; }
    .legend ul { list-style: none; margin: 0; padding: 0; }
    .legend li { display: flex; justify-content: space-between; height: 19px; line-height: 20px; font-size: 12px; }
    .legend li:not(:last-child) { height: 24px; }
    .legend li svg { background: #000; height: 100%; }

    .wave { padding: 18px 87px 0 7px; }
    .wave .label { padding: 0 0 1px 50px; }
    .wave .metal { padding: 8px 24px 0 0; height: 204px; }
    .s2 { --gutter: 64px; --h: 156px; }
    .wave .xlabel, .graph .xlabel { padding-left: 62px; }
    .graph { padding: 11px 0 0 14px; }
    .graph > .label { padding: 0 0 1px 33px; }
    .graphrow { display: flex; align-items: flex-end; gap: 8px; padding-right: 17px; }
    .graphrow > div.metal { flex: 1; min-width: 0; height: 260px; padding: 8px 24px 0 0; }
    .s3 { --gutter: 71px; --h: 211px; }
    .diamond { flex: none; width: 59px; height: 37px; margin-bottom: 44px; display: grid; place-items: center; border-left: 0; border-right: 0; padding: 0; }
    .graphpals { display: flex; align-items: flex-start; }
    .cur { display: grid; height: 64px; align-content: center; padding: 0 16px 2px 14px; }
    .cur.a { grid-template-columns: 97px 20px 20px 20px; width: 193px; margin-right: 15px; gap: 7px 2px; }
    .cur.b { grid-template-columns: 98px 52px 52px 19px 19px 20px; width: 302px; gap: 7px 3px; padding-right: 12px; }
    .cur .tool, .mini .tool { height: 19px; padding: 0; }
    .cur input { height: 23px; padding: 0 3px; background: #fff; border: 1px solid; border-color: #7a787a #d8d8d8 #d8d8d8 #7a787a; }
    .mini { display: flex; gap: 2px; width: 89px; height: 24px; margin: 2px 0 0 3px; padding: 1px 13px; }
    .mini .tool { width: 20px; }

    .bandlabel { padding: 8px 0 1px 150px; text-align: center; margin-right: 31px; }
    .bands { padding: 6px 24px 0 0; }
    .bands .s4 { --gutter: 70px; --h: 152px; margin-bottom: 8px; }
    .bands .s4.last { --h: 156px; margin-bottom: 1px; }
    .bands .xlabel { padding-left: 70px; }
    .right .mini { margin: 5px 0 0 2px; }

    .taskbar { display: flex; align-items: center; height: 33px; padding: 3px 3px 0 2px; border-top: 1px solid #000; box-shadow: inset 0 1px #fff; font-size: 16px; }
    .start { display: flex; align-items: center; gap: 4px; width: 70px; height: 27px; padding: 0 3px; font-size: 18px; }
    .quick { display: flex; gap: 7px; padding: 0 0 0 7px; margin-left: 8px; border-left: 2px groove #fff; }
    .tasks { display: flex; gap: 2px; flex: 1; min-width: 0; margin-left: 30px; padding-left: 6px; border-left: 2px groove #fff; }
    .task { display: flex; align-items: center; gap: 2px; flex: 0 1 160px; min-width: 0; height: 27px; padding: 0 2px; }
    .task span { line-height: 22px; }
    .task.active { background: #ecebe8; border-color: #404040 #fff #fff #404040; box-shadow: inset 1px 1px #848284; }
    .tray { display: flex; align-items: center; gap: 2px; width: 223px; height: 27px; padding-left: 3px; border: 1px solid; border-color: #848284 #fff #fff #848284; }
    .tray time { margin-left: auto; padding-right: 22px; }
  `;

  private spin(name: string) {
    return html`<span class="spin"><button aria-label="Increment ${name}">${upTri}</button><button aria-label="Decrement ${name}">${downTri}</button></span>`;
  }

  private num(id: string, value: string, width: string, height = "") {
    return html`<div class="num ${height}">${this.spin(id)}<input id=${id} class="etched ${width}" .value=${value} /></div>`;
  }

  private range(id: string, position: string) {
    return html`<div class="cluster ${position}">
      <label for="${id}-low">low band</label>${this.num(`${id}-low`, "63 Hz", "w58")}
      <label for="${id}-high">high band</label>${this.num(`${id}-high`, "16000 Hz", "w58")}
    </div>`;
  }

  private index(name: string) {
    return html`<div class="index"><div class="num">${this.spin(name)}<input id=${name} .value=${"0"} /></div></div>`;
  }

  private oval(name: string) {
    return html`<button class="oval" aria-label=${name}><svg width="54" height="24" viewBox="0 0 54 24"><defs><linearGradient id="g" x2="1"><stop offset="0" stop-color="#fff"/><stop offset=".6" stop-color="#d8d8d8"/><stop offset="1" stop-color="#aaa"/></linearGradient></defs><ellipse cx="28" cy="13" rx="24" ry="9" fill="#8c8a8c"/><ellipse cx="25" cy="11" rx="24" ry="9" fill="url(#g)" stroke="#4c4a4c" stroke-width="1.500"/><path d="M30 6h8q4 2 5 5-1 3-5 5h-8z" fill="#2f6420"/></svg></button>`;
  }

  private left() {
    return html`<section class="left">
      <div class="top">
        <div class="ranges">
          <span class="label">frequency range</span>
          ${this.range("range1", "first")}
          <span class="label">equency range</span>
          ${this.range("range2", "second")}
        </div>
        <div class="info">
          <div class="switches">
            <div><label for="settled">settled?</label><button id="settled" class="btn sunk yes">Yes</button></div>
            <div><label for="dbon">dB On (T)</label><div class="toggle"><button id="dbon" aria-pressed="true"></button>ON</div></div>
          </div>
          <span class="label">channel info</span>
          <div class="cluster channel">
            <div><label for="sens">sensor sensitivity [mV/EU]</label>${this.num("sens", "1000.00", "w48", "h20")}</div>
            <div><label class="unit" for="eng">engineering units</label>${this.num("eng", "V", "w58", "h20")}</div>
            <div><label for="dbref">dB reference [EU]</label>${this.num("dbref", "1.0E+0", "w48", "h20")}</div>
            <div><label class="marked" for="custom">custom label<svg class="px" width="78" height="20" viewBox="0 0 78 20"><path d="M1 6V1h6M71 1h6v5M1 14v5h6M71 19h6v-5" fill="none" stroke="#222"/></svg></label><div class="num h20 nospin"><input id="custom" class="etched w62" .value=${"EU"} /></div></div>
            <div><label for="fweight">frequency weighting</label>${this.num("fweight", "A-", "w62", "h20")}</div>
            <div><label class="pre" for="pregain">pregain [dB]</label>${this.num("pregain", "-30.00", "w48", "h20")}</div>
          </div>
        </div>
      </div>
      <div class="avg">
        <div><label for="avgtype">averaging type</label>${this.num("avgtype", "Linear", "w96", "h22")}</div>
        <div><span class="label">reset averaging</span><button class="btn off" aria-label="reset averaging">OFF</button></div>
      </div>
      <span class="label ptitle">averaging parameters</span>
      <div class="params">
        <div class="cluster">
          <div class="prow"><b class="indent1">Linear</b>${this.num("lin", "single averaging", "w145")}</div>
          <div class="prow"><b>Exponential</b><div>
            <div class="pair"><label for="expmode">exponential mode</label>${this.num("expmode", "Impuls", "w48")}</div>
            <div class="pair"><label for="tconst">time constant [ms]</label>${this.num("tconst", "125.00", "w48")}</div></div></div>
          <div class="prow"><b class="eq">Equal confidence</b><div class="pair"><label for="conf">confidence [dB]</label>${this.num("conf", "1.00", "w48")}</div></div>
          <div class="prow"><b class="indent2">Peak</b>${this.num("peak", "start peak detection once", "w168")}</div>
        </div>
        <div class="error">error <span class="led"></span></div>
      </div>
      <div class="actions">
        <div><label for="lezen">lees/meet</label><button id="lezen" class="btn sunk lezen">lezen</button></div>
        <button class="btn stop" @click=${() => (this.running = false)}>STOP</button>
        <div class="save"><span class="label">SAVE</span>${this.oval("SAVE")}</div>
        <div class="show"><span class="label">zichtbaar</span>${this.oval("zichtbaar")}</div>
      </div>
      <div class="device">
        <div class="pair"><label for="device"><b>device</b> (1)</label>${this.num("device", "1", "w62", "h22")}</div>
        <div class="tfield"><label for="t">t</label><input id="t" .value=${"5.0000"} /></div>
      </div>
      <div class="row channels">
        <label for="channels"><b>channels</b> (0)</label>${this.index("channels")}
        <div class="io array"><svg width="10" height="18" viewBox="0 0 10 18"><path d="M1 2h5M1 7h5M3 2v5M9 6l-8 7" stroke="#222" fill="none"/><ellipse cx="7" cy="13" rx="2" ry="3" fill="none" stroke="#222"/></svg><select class="etched" aria-label="channel"><option>0</option></select><span class="dd"><svg width="7" height="4" viewBox="0 0 7 4"><path d="M0 0h7L3.500 4z" fill="#666"/></svg></span></div>
      </div>
      <div class="row limits">
        <label for="input-limits">input limits</label>${this.index("input-limits")}
        <div class="array">
          <div><label for="high">high limit (0.0)</label>${this.num("high", "0.10", "w58")}</div>
          <div><label for="low">low limit (0.</label>${this.num("low", "-0.10", "w58")}</div>
        </div>
      </div>
      <div class="row coupling">
        <label for="coupling-index">coupling &amp; input config</label>${this.index("coupling-index")}
        <div class="array">
          <div><label for="coupling">coupling (no change:0)</label><div class="num">${this.spin("coupling")}<input id="coupling" class="etched w107 mid" .value=${"no change"} /><input class="etched" aria-label="coupling value" .value=${"0"} /></div></div>
          <div><label for="config">input config (no change:0)</label><div class="num">${this.spin("config")}<input id="config" class="etched w107 mid" .value=${"no change"} /><input class="etched" aria-label="config value" .value=${"0"} /></div></div>
        </div>
      </div>
      <div class="row meet1"><label for="rate"><b>MEET scan rate</b></label>${this.num("rate", "10000.00", "w62", "h22")}</div>
      <div class="row meet2"><label for="scans"><b>MEET number of scans</b></label>${this.num("scans", "1000", "w62", "h22")}</div>
      <label class="pathlabel" for="path"><b>file path</b></label>
      <input id="path" class="etched path" .value=${"C:\\_paul_d_lv2003\\Transfo-geluid-Nuyens\\puls11.dat"} />
      <div class="row file1"><label for="samples"><b>FILE LEES SAMPLES/READ</b></label>${this.num("samples", "200", "w48", "h22")}</div>
      <div class="row file2"><label for="freq">FILE LEES sampling frequency</label>${this.num("freq", "10000.00", "w58", "h22")}</div>
    </section>`;
  }

  private tool(icon: unknown, name: string, on = false) {
    return html`<button class=${classMap({ tool: true, on })} aria-label=${name}>${icon}</button>`;
  }

  private mini(active: number) {
    return html`<div class="metal mini">
      ${this.tool(glyphs.cross, "Cursor", active === 0)}${this.tool(glyphs.zoom, "Zoom", active === 1)}${this.tool(glyphs.hand, "Pan", active === 2)}
    </div>`;
  }

  private center() {
    const log = (f: number) => (Math.log(f / 40) / Math.log(400)) * 100;
    const series = [RED, GREEN, BLUE, YELLOW, PURPLE];
    const field = (name: string, value: string) => html`<input aria-label=${name} .value=${value} />`;
    return html`<section class="center">
      <div class="spectrum">
        <div class="specmain">
          <div class="spechead"><span>dB(A) ref 1.0E+0 V</span><h2>Third-octave analysis (ANSI)</h2></div>
          <div class="s1frame">
            ${chart({ size: "s1", yTicks: ["10.0", "0.0", "-10.0", "-20.0", "-30.0", "-40.0", "-50.0", "-60.0"], xTicks: [["40", 0], ["100", log(100)], ["1000", log(1000)], ["10000", log(10000)], ["16000", 100]] })}
          </div>
          <div class="below">
            <div class="pals">
              <div class="pal three">${glyphs.bars}${this.tool(glyphs.x, "Autoscale X")}${this.tool(glyphs.fmtX, "Format X")}${glyphs.bars}${this.tool(glyphs.y, "Autoscale Y")}${this.tool(glyphs.fmtY, "Format Y")}</div>
              <div class="pal two">${this.tool(glyphs.zoom, "Zoom")}${this.tool(glyphs.plus, "Cursor")}${this.tool(glyphs.hand, "Pan")}</div>
            </div>
            <span>Frequency [Hz]</span>
          </div>
        </div>
        <div class="metal legend"><ul>
          ${["125 Hz", "250 Hz", "500 Hz", "1kHz", "2kHz", "4Hz"].map((t, i) => html`<li>${t}<svg width="19" height="24" viewBox="0 0 19 24"><path d="M2 16L10 4l8 12" fill="none" stroke=${COLORS[i]} /></svg></li>`)}
        </ul></div>
      </div>
      <div class="wave">
        <span class="label">Waveform Chart</span>
        <div class="metal">
          ${chart({
            size: "s2", yLabel: "Amplitude", yTicks: ["0.1", "0.0", "-0.1"],
            xTicks: range(11).map((i) => [String(i * 500), i * 10] as [string, number]),
            plot: svg`<g class="px"><path d=${gridPath(50, 20)} stroke="#0a3418"/><path d=${gridPath(10, 1)} stroke="#12682c"/></g>
              <svg viewBox="0 0 481 154" width="1000" height="100" preserveAspectRatio="none"><path class="px" d=${WAVE} stroke="#fff"/></svg>`,
          })}
          <span class="xlabel">Time</span>
        </div>
      </div>
      <div class="graph">
        <span class="label">Waveform Graph 2</span>
        <div class="graphrow">
          <div class="metal">
            ${chart({
              size: "s3", yLabel: "Amplitude", yTicks: ["20.0", "10.0", "0.0", "-10.0", "-20.0", "-30.0", "-40.0", "-50.0", "-60.0"],
              xTicks: range(16).map((i) => [(i / 10).toFixed(1), (i * 100) / 15] as [string, number]),
              plot: svg`<g class="px"><path d=${gridPath(75, 40)} stroke="#06300e"/><path d=${gridPath(15, 8)} stroke="#106018"/></g>
                ${series.map((s, i) => line(s, 75, 20, -60, COLORS[i + 1]))}
                <polyline points=${STEPS.map(([x, y]) => `${(x / 1.5) * 1000},${((20 - y) / 80) * 100}`).join(" ")} fill="none" stroke="#fff"/>
                <path class="px" d="M0 25H1000M0 80.100H1000M613 0V100M1 0V100" stroke="#ffff40"/>`,
              overlay: html`<span class="cursorname flag1">piek</span><span class="cursorname flag2">-60dB</span>`,
            })}
            <span class="xlabel">Time</span>
          </div>
          <button class="metal diamond" aria-label="Move cursor"><svg width="32" height="32" viewBox="0 0 32 32"><path d="M16 1l7 7-7 7-7-7zM16 17l7 7-7 7-7-7zM8 9l7 7-7 7-7-7zM24 9l7 7-7 7-7-7z" fill="none" stroke="#111"/></svg></button>
        </div>
        <div class="graphpals">
          <div class="metal cur a">
            ${field("X scale name", "Time")}${this.tool(glyphs.lock, "Lock X")}${this.tool(glyphs.x, "Autoscale X")}${this.tool(glyphs.fmtX, "Format X")}
            ${field("Y scale name", "Amplitude")}${this.tool(glyphs.lock, "Lock Y")}${this.tool(glyphs.y, "Autoscale Y")}${this.tool(glyphs.fmtY, "Format Y")}
          </div>
          <div class="metal cur b">
            ${[["piek", "0.00", "0.00"], ["-60dB", "0.92", "-44.09"]].map(([n, x, y]) => html`${field("Cursor name", n)}${field(`${n} x`, x)}${field(`${n} y`, y)}${this.tool(glyphs.move, `Move ${n}`)}${this.tool(glyphs.cursor, `Style ${n}`)}${this.tool(glyphs.lockDrop, `Lock ${n}`)}`)}
          </div>
          ${this.mini(0)}
        </div>
      </div>
    </section>`;
  }

  private right() {
    const ticks = ["-20.0", "-30.0", "-40.0", "-50.0", "-60.0", "-70.0"];
    return html`<section class="right">
      <div class="bandlabel">band power [dB EU]</div>
      <div class="metal bands">
        ${BANDS.map((b, i) => chart({
          size: i === 5 ? "s4 last" : "s4",
          yLabel: i ? `Amplitude ${i + 1}` : "Amplitude",
          yTicks: ticks,
          plot: line(b, 250, -20, -70, COLORS[i]),
          xTicks: i === 5 ? [["0", 0], ["250", 100]] : undefined,
        }))}
        <span class="xlabel">Time</span>
      </div>
      ${this.mini(1)}
    </section>`;
  }

  render() {
    const menu = ["File", "Edit", "Operate", "Tools", "Browse", "Window", "Help"];
    return html`
      <header class="titlebar">
        ${lvIcon}
        <h1>ANSI Third-octave Analysis Example_pb7.vi</h1>
        <div class="winbtns">
          <button aria-label="Minimize"><svg class="px" width="11" height="10" viewBox="0 0 11 10"><path d="M2 8h6v2H2z"/></svg></button>
          <button aria-label="Restore"><svg class="px" width="11" height="10" viewBox="0 0 11 10"><path d="M3 0h8v7H8v3H0V4h3zM4 2v2h4v2h2V2zM1 6v3h6V6z" fill-rule="evenodd"/></svg></button>
          <button aria-label="Close"><svg width="11" height="10" viewBox="0 0 11 10"><path d="M1 1l8 8M9 1L1 9" stroke="#000" stroke-width="2"/></svg></button>
        </div>
      </header>
      <div class="chrome">
        <div class="bars">
          <nav class="menu">${menu.map((m) => html`<a href="#"><u>${m[0]}</u>${m.slice(1)}</a>`)}</nav>
          <div class="tools">
            <button aria-label="Run"><svg width="14" height="14" viewBox="0 0 14 14"><path d="M1 5h6V1l6 6-6 6V9H1z" fill="#fff" stroke="#000"/></svg></button>
            <button aria-label="Run continuously"><svg width="16" height="16" viewBox="0 0 16 16"><path d="M1 8l3-4h5l-2-3 7 4-4 5-1-3H5L3 9zM15 8l-3 5H7l2 3-7-4 4-5 1 3h4l2-3z" fill="#fff" stroke="#000"/></svg></button>
            <button class="flat" aria-label="Abort"><svg width="16" height="16" viewBox="0 0 16 16"><circle cx="8" cy="8" r="7" fill=${this.running ? "#e87878" : "#c8a8a8"} stroke="#888"/><circle cx="8" cy="8" r="5" fill="none" stroke="#f0a0a0"/></svg></button>
            <button aria-label="Pause"><svg width="10" height="10" viewBox="0 0 10 10"><path d="M0 0h4v10H0zM6 0h4v10H6z"/></svg></button>
            <div class="font"><select aria-label="Font"><option>16pt Application Font</option></select>${drop}</div>
            <button class="wide" aria-label="Align"><svg class="px" width="17" height="14" viewBox="0 0 17 14"><rect x="1" y="0" width="5" height="5" fill="#28a028"/><path d="M3 6v7M1 10h5M7 9h2" stroke="#000"/><rect x="9" y="7" width="7" height="4" fill="#f0e850" stroke="#000"/></svg>${drop}</button>
            <button class="wide" aria-label="Distribute"><svg class="px" width="17" height="14" viewBox="0 0 17 14"><path d="M0 1h16M8 0v3" stroke="#000"/><rect x="1" y="7" width="3" height="3"/><rect x="6" y="5" width="4" height="8" fill="#f0e850" stroke="#000"/><rect x="12" y="8" width="4" height="4" fill="#28a028" stroke="#000"/></svg>${drop}</button>
            <button class="wide" aria-label="Reorder"><svg width="17" height="14" viewBox="0 0 17 14"><path d="M1 9q-1-6 6-6V0l4 4-4 4V6Q4 6 4 9zM16 4q1 7-6 7v2l-4-4 3-4v3q4 0 4-4z" fill="#777" stroke="#333"/></svg>${drop}</button>
          </div>
        </div>
        <div class="viicon"><svg width="32" height="32" viewBox="0 0 32 32"><rect x="1" y="1" width="30" height="30" fill="#fff" stroke="#000" stroke-width="2"/><text x="13" y="8" font-size="7" font-family="Liberation Mono, monospace">ANSI</text><path d="M3 4l2 1-2 1M7 3q2 2 0 4M5 21v-5h3v2h2v-5h3v-2h3v2h2v-5h4v4h2v2h3v4M2 27h28" fill="none" stroke="#000"/><path d="M3 24l3 3 3 3 4-3 4-4 4 4 3 3 4-3M7 20h20M10 16v6M14 14v8M18 12v10M22 14v8M26 16v6" fill="none" stroke="#222" stroke-dasharray="1 1"/></svg></div>
      </div>
      <main class="workspace">
        <div class="panel">${this.left()}${this.center()}${this.right()}</div>
        <div class="vscroll"><button class="raised" aria-label="Scroll up">${upTri}</button><span class="vtrack"></span><span class="vthumb raised"></span><span class="vrest"></span><button class="raised" aria-label="Scroll down">${downTri}</button></div>
        <div class="hscroll"><button class="raised" aria-label="Scroll left"><svg width="4" height="7" viewBox="0 0 4 7"><path d="M4 0v7L0 3.500z"/></svg></button><span class="htrack"></span><span class="hthumb raised"></span><span class="hrest"></span><button class="raised" aria-label="Scroll right"><svg width="4" height="7" viewBox="0 0 4 7"><path d="M0 0v7l4-3.500z"/></svg></button></div>
        <svg width="18" height="18" viewBox="0 0 18 18"><path d="M6 17L17 6M10 17l7-7M14 17l3-3" stroke="#848284" stroke-width="2"/></svg>
      </main>
      <footer class="taskbar">
        <button class="raised start"><svg width="17" height="16" viewBox="0 0 17 16"><path d="M0 3h3M0 6h3M0 9h3M0 12h3" stroke="#111" stroke-width="2" stroke-dasharray="1 1"/><path d="M4 2q3-1 5 0v5q-2-1-5 0z" fill="#e03018" stroke="#111"/><path d="M10 2q3 2 6 0v6q-3 1-6-1z" fill="#30a830" stroke="#111"/><path d="M4 8q3-1 5 0v6q-2-2-5 0z" fill="#2038c0" stroke="#111"/><path d="M10 9q3 1 6 0v5q-3 2-6 0z" fill="#e8d020" stroke="#111"/></svg>Start</button>
        <div class="quick">${quick}</div>
        <div class="tasks">
          <button class="raised task"><span>LabVIEW</span></button>
          <button class="raised task active">${lvIcon}<b>ANSI Third-oc...</b></button>
          <button class="raised task">${searchIcon}<span>zaalakoestiek</span></button>
          <button class="raised task">${lvIcon}<span>ANSI Third-octa...</span></button>
          <button class="raised task">${excelIcon}<span>Microsoft Excel -...</span></button>
        </div>
        <div class="tray">${tray}<time>0:53</time></div>
      </footer>
    `;
  }
}
